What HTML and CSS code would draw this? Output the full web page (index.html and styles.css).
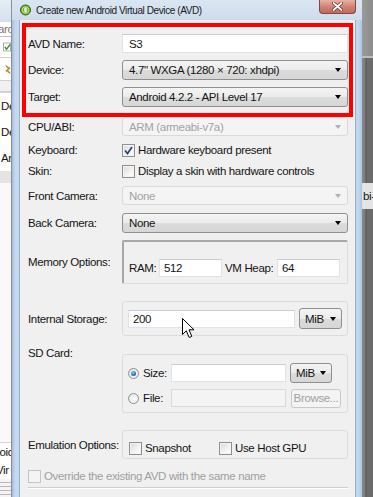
FILE: index.html
```html
<!DOCTYPE html>
<html lang="en">
<head>
    <meta charset="UTF-8">
    <meta name="viewport" content="width=device-width, initial-scale=1.0">
    <title>Create new Android Virtual Device (AVD)</title>
    <link rel="stylesheet" href="styles.css">
</head>
<body>
    <div class="screen">
        <!-- window behind the dialog, left side -->
        <div class="bg-left">
            <div class="bl-top"></div>
            <div class="bl-row bl-search"><span>arc</span></div>
            <div class="bl-row bl-h20">
                <svg class="bl-chk" width="9" height="10" viewBox="0 0 9 10"><rect x="0.5" y="0.5" width="8" height="9" fill="#fff" stroke="#9aa7b5"/><path d="M2 5 L4 7.5 L8 2" fill="none" stroke="#3a9a2a" stroke-width="1.6"/></svg>
            </div>
            <div class="bl-row bl-h22">
                <svg class="bl-gold" width="7" height="11" viewBox="0 0 7 11"><path d="M1 1 L6 4 L3 6 L6 10 L1 7 L4 5 Z" fill="#e0a628" stroke="#a06a10" stroke-width="0.8"/></svg>
            </div>
            <div class="bl-gap"></div>
            <div class="bl-row bl-text bl-first"><span>De</span></div>
            <div class="bl-row bl-text"><span>Dev</span></div>
            <div class="bl-row bl-text"><span>And</span></div>
            <div class="bl-band"></div>
            <div class="bl-fill"></div>
            <div class="bl-row bl-low bl-first"><span>roid</span></div>
            <div class="bl-row bl-low"><span>Vir</span></div>
            <div class="bl-foot"></div>
        </div>

        <div class="window">
            <div class="titlebar">
                <svg class="app-icon" width="11" height="12" viewBox="0 0 11 12">
                    <circle cx="5.5" cy="6" r="5" fill="#6ab02a" stroke="#2f5f0e" stroke-width="1"/>
                    <circle cx="5.5" cy="6" r="3.3" fill="none" stroke="#d8ee9a" stroke-width="0.8"/>
                    <rect x="4.3" y="3.5" width="2.4" height="5" rx="1" fill="#f4f8d8"/>
                </svg>
                <span class="title">Create new Android Virtual Device (AVD)</span>
                <div class="close-btn">
                    <svg width="11" height="9" viewBox="0 0 11 9"><path d="M1.5 1 L9.5 8 M9.5 1 L1.5 8" stroke="#6b2a22" stroke-width="3.2" stroke-linecap="round"/><path d="M1.5 1 L9.5 8 M9.5 1 L1.5 8" stroke="#fff" stroke-width="1.8" stroke-linecap="round"/></svg>
                </div>
            </div>

            <div class="dlg-body">
                <div class="highlight">
                    <div class="row row-name">
                        <span class="lbl">AVD Name:</span>
                        <div class="field field-wide">S3</div>
                    </div>
                    <div class="row row-sel">
                        <span class="lbl">Device:</span>
                        <div class="combo combo-wide"><span>4.7" WXGA (1280 × 720: xhdpi)</span><i class="arrow"></i></div>
                    </div>
                    <div class="row row-sel">
                        <span class="lbl">Target:</span>
                        <div class="combo combo-wide"><span>Android 4.2.2 - API Level 17</span><i class="arrow"></i></div>
                    </div>
                </div>

                <div class="row row-cpu">
                    <span class="lbl">CPU/ABI:</span>
                    <div class="combo combo-wide disabled"><span>ARM (armeabi-v7a)</span><i class="arrow"></i></div>
                </div>
                <div class="row row-check row-kbd">
                    <span class="lbl">Keyboard:</span>
                    <span class="chk checked">
                        <svg width="9" height="9" viewBox="0 0 9 9"><path d="M1 4.5 L3.5 7.5 L8 1" fill="none" stroke="#2b3f7a" stroke-width="1.7"/></svg>
                    </span>
                    <span class="chk-text">Hardware keyboard present</span>
                </div>
                <div class="row row-check row-skin">
                    <span class="lbl">Skin:</span>
                    <span class="chk"></span>
                    <span class="chk-text">Display a skin with hardware controls</span>
                </div>
                <div class="row row-front">
                    <span class="lbl">Front Camera:</span>
                    <div class="combo combo-wide disabled"><span>None</span><i class="arrow"></i></div>
                </div>
                <div class="row row-back">
                    <span class="lbl">Back Camera:</span>
                    <div class="combo combo-wide"><span>None</span><i class="arrow"></i></div>
                </div>

                <div class="row row-mem">
                    <span class="lbl">Memory Options:</span>
                    <div class="group group-mem">
                        <span class="sub-lbl lbl-ram">RAM:</span>
                        <div class="field field-mem">512</div>
                        <span class="sub-lbl lbl-heap">VM Heap:</span>
                        <div class="field field-mem">64</div>
                    </div>
                </div>

                <div class="row row-storage">
                    <span class="lbl">Internal Storage:</span>
                    <div class="group group-storage">
                        <div class="field field-storage">200</div>
                        <div class="combo combo-unit"><span>MiB</span><i class="arrow"></i></div>
                    </div>
                </div>

                <div class="row row-sd">
                    <span class="lbl">SD Card:</span>
                    <div class="group group-sd">
                        <div class="sd-line">
                            <span class="radio-opt"><span class="radio on"></span><span>Size:</span></span>
                            <div class="field field-sd">&nbsp;</div>
                            <div class="combo combo-unit combo-sd"><span>MiB</span><i class="arrow"></i></div>
                        </div>
                        <div class="sd-line sd-file">
                            <span class="radio-opt"><span class="radio"></span><span>File:</span></span>
                            <div class="field field-sd disabled">&nbsp;</div>
                            <div class="btn disabled">Browse...</div>
                        </div>
                    </div>
                </div>

                <div class="row row-emu">
                    <span class="lbl">Emulation Options:</span>
                    <div class="group group-emu">
                        <span class="chk"></span>
                        <span class="chk-text opt-snap">Snapshot</span>
                        <span class="chk"></span>
                        <span class="chk-text">Use Host GPU</span>
                    </div>
                </div>

                <div class="row row-check row-override">
                    <span class="chk disabled"></span>
                    <span class="chk-text dim">Override the existing AVD with the same name</span>
                </div>
                <div class="separator"></div>
            </div>
        </div>

        <!-- window behind the dialog, right side -->
        <div class="bg-right">
            <div class="br-top"></div>
            <div class="br-mid"></div>
            <div class="br-label"><span>bi-</span></div>
            <div class="br-low"></div>
        </div>

        <svg class="cursor" width="13" height="21" viewBox="0 0 13 21">
            <path d="M0.5 0.5 L0.5 16.5 L4.3 12.8 L7.2 19.5 L9.8 18.4 L7 11.8 L12 11.8 Z" fill="#fff" stroke="#000" stroke-width="1" stroke-linejoin="round"/>
        </svg>
    </div>
</body>
</html>
```

FILE: styles.css
```css
body {
    margin: 0;
    font-family: "Liberation Sans", Arial, sans-serif;
    font-size: 11.5px;
    letter-spacing: -0.35px;
    color: #141414;
    overflow: hidden;
}
.screen {
    position: relative;
    display: flex;
    width: 373px;
    height: 497px;
    overflow: hidden;
    background: #6a6a6a;
}

/* ---- background window, left ---- */
.bg-left {
    width: 11px;
    border-right: 1px solid #8b8f96;
    background: #f7f7f7;
    display: flex;
    flex-direction: column;
    overflow: hidden;
}
.bl-top {
    height: 22px;
    background: linear-gradient(#e6eef7, #d3e0ee);
}
.bl-row {
    display: flex;
    align-items: center;
    white-space: nowrap;
    border-bottom: 1px solid #d2d2d2;
    background: #fff;
}
.bl-search {
    height: 14px;
    color: #777;
    border-bottom-color: #c0c0c0;
}
.bl-search span { margin-left: -2px; }
.bl-h20 { height: 20px; }
.bl-h22 { height: 22px; }
.bl-chk { margin-left: 3px; }
.bl-gold { margin-left: 5px; }
.bl-gap {
    height: 10px;
    background: #f0f0f0;
    border-bottom: 1px solid #cfcfcf;
}
.bl-text {
    height: 26px;
    border-bottom: none;
}
.bl-text span { margin-left: 1px; }
.bl-first { border-top: 1px solid #d6d6d6; }
.bl-band {
    height: 12px;
    background: #e4e4e4;
}
.bl-fill {
    flex: 1;
    background: #f9f9f9;
}
.bl-low {
    height: 18px;
    border-bottom: none;
}
.bl-low span { margin-left: -4px; }
.bl-foot {
    height: 18px;
    background: repeating-linear-gradient(#f4f4f4 0 3px, #b8b8b8 3px 4px);
}

/* ---- dialog window ---- */
.window {
    width: 337px;
    padding: 0 6px 0 7px;
    background: linear-gradient(90deg, #9fbcdc, #c5d8ee 3px, #cfdff1 50%, #c2d6ec calc(100% - 3px), #a9c3e0);
    display: flex;
    flex-direction: column;
}
.titlebar {
    height: 20px;
    display: flex;
    align-items: center;
    margin: 0 -6px 0 -7px;
    padding: 0 6px 0 8px;
    background: linear-gradient(#dbe6f3, #cfdcec);
}
.app-icon {
    flex: none;
    margin-right: 5px;
}
.title {
    font-size: 10px;
    letter-spacing: -0.4px;
    color: #1a1a1a;
}
.close-btn {
    margin-left: auto;
    align-self: flex-start;
    width: 35px;
    height: 13px;
    border: 1px solid #7a4a48;
    border-top: none;
    border-radius: 0 0 4px 4px;
    background: linear-gradient(#e8b0a6, #d0806f 55%, #c46a5a);
    display: flex;
    align-items: center;
    justify-content: center;
}

.dlg-body {
    flex: 1;
    background: #f0f0f0;
    padding: 3px 3px 0;
    box-shadow: inset 1px 0 0 #9aaec6, inset -1px 0 0 #9aaec6;
}
.highlight {
    border: 4px solid #ff0000;
    padding: 7px 1px 6px 2px;
}
.row {
    display: flex;
    align-items: center;
    padding: 0 5px 0 6px;
}
.highlight .row { padding: 0; }
.lbl {
    width: 94px;
    flex: none;
    white-space: nowrap;
}

/* vertical rhythm */
.row-name { height: 19px; }
.row-sel { height: 20px; margin-top: 7px; }
.row-cpu { height: 19px; }
.row-kbd { height: 16px; margin-top: 6px; }
.row-skin { height: 16px; margin-top: 5px; }
.row-front { height: 19px; margin-top: 7px; }
.row-back { height: 20px; margin-top: 8px; }
.row-mem { margin-top: 7px; }
.row-storage { margin-top: 17px; }
.row-sd { margin-top: 10px; align-items: flex-start; }
.row-sd .lbl { line-height: 14px; }
.row-emu { margin-top: 17px; }
.row-override { height: 16px; margin-top: 9px; }

/* controls */
.field {
    background: #fff;
    border: 1px solid #e2e3ea;
    border-top-color: #c9ccd4;
    box-sizing: border-box;
    padding: 0 4px;
    display: flex;
    align-items: center;
    white-space: nowrap;
}
.field.disabled {
    background: #f4f4f4;
    border-color: #dadada;
}
.field-wide {
    flex: 1;
    height: 19px;
    padding-left: 6px;
}
.combo {
    box-sizing: border-box;
    display: flex;
    align-items: center;
    padding: 0 6px 0 6px;
    border: 1px solid #8e8f8f;
    border-radius: 3px;
    background: linear-gradient(#f4f4f4, #ebebeb 50%, #dcdcdc 51%, #d6d6d6);
    white-space: nowrap;
}
.combo-wide {
    flex: 1;
    height: 100%;
}
.arrow {
    margin-left: auto;
    width: 0;
    height: 0;
    border-left: 3.5px solid transparent;
    border-right: 3.5px solid transparent;
    border-top: 4px solid #000;
}
.combo.disabled {
    background: #f4f4f4;
    border-color: #d9d9d9;
    color: #a3a3a3;
}
.combo.disabled .arrow { border-top-color: #b0b0b0; }

.chk {
    box-sizing: border-box;
    width: 13px;
    height: 13px;
    flex: none;
    border: 1px solid #8e8f8f;
    background: linear-gradient(135deg, #d8d8d8, #f4f4f4 60%, #fff);
    box-shadow: inset 0 0 0 1px #f4f4f4;
    display: flex;
    align-items: center;
    justify-content: center;
}
.chk.disabled {
    border-color: #c4c4c4;
    background: #f4f4f4;
}
.chk-text {
    margin-left: 3px;
    white-space: nowrap;
}
.dim { color: #a0a0a0; }

.group {
    flex: 1;
    box-sizing: border-box;
    border: 1px solid #dcdcdc;
    border-radius: 3px;
    display: flex;
    align-items: center;
}
.group-mem {
    height: 44px;
    border-top: 2px solid #a7a7a7;
    border-left: 2px solid #a7a7a7;
    border-radius: 2px;
    padding: 17px 0 6px 5px;
}
.sub-lbl { white-space: nowrap; }
.lbl-ram { width: 30px; }
.lbl-heap { width: 52px; margin-left: 3px; }
.field-mem {
    width: 63px;
    height: 18px;
}
.group-storage {
    height: 35px;
    padding: 0 4px 0 5px;
}
.field-storage {
    width: 167px;
    height: 18px;
    margin-top: 1px;
}
.combo-unit {
    width: 43px;
    height: 21px;
    margin-left: 4px;
    padding: 0 5px;
}
.group-sd {
    height: 59px;
    margin-top: 8px;
    flex-direction: column;
    align-items: stretch;
    padding: 8px 0 0 5px;
}
.sd-line {
    height: 20px;
    display: flex;
    align-items: center;
}
.sd-file { margin-top: 5px; }
.radio-opt {
    width: 43px;
    display: flex;
    align-items: center;
    gap: 4px;
}
.radio {
    box-sizing: border-box;
    width: 11px;
    height: 11px;
    border-radius: 50%;
    border: 1px solid #8e8f8f;
    background: radial-gradient(circle at 60% 60%, #fff, #dcdcdc);
    display: flex;
    align-items: center;
    justify-content: center;
}
.radio.on::after {
    content: "";
    width: 5px;
    height: 5px;
    border-radius: 50%;
    background: radial-gradient(circle at 40% 35%, #8ad0f4, #1f6fb4 60%, #0c3e78);
}
.field-sd {
    width: 115px;
    height: 18px;
}
.combo-sd {
    width: 42px;
    height: 20px;
}
.btn {
    box-sizing: border-box;
    width: 50px;
    height: 19px;
    margin-left: 5px;
    border: 1px solid #c8c8c8;
    border-radius: 3px;
    background: #f4f4f4;
    display: flex;
    align-items: center;
    justify-content: center;
}
.btn.disabled { color: #a0a0a0; }
.group-emu {
    height: 29px;
    padding: 7px 0 0 6px;
}
.opt-snap { width: 74px; }

.separator {
    height: 1px;
    margin: 3px 5px 0 6px;
    background: #cfcfcf;
    box-shadow: 0 1px 0 #fff;
}

/* ---- background window, right ---- */
.bg-right {
    width: 11px;
    display: flex;
    flex-direction: column;
    background: linear-gradient(90deg, #8a8a8a, #7c7c7c 3px, #555 4px, #6c6c6c 5px, #6a6a6a);
}
.br-top {
    height: 56px;
    background: linear-gradient(90deg, #9a9a9a, #8c8c8c);
    border-bottom: 2px solid #bdbdbd;
}
.br-mid { height: 125px; }
.br-label {
    height: 26px;
    background: #e4e4e4;
    display: flex;
    align-items: center;
    overflow: hidden;
}
.br-label span { margin-left: 1px; }
.br-low {
    flex: 1;
    background: linear-gradient(90deg, #8a8a8a, #7c7c7c 3px, #555 4px, #6c6c6c 5px, #6a6a6a);
}

/* mouse pointer lies over the field */
.cursor {
    position: absolute;
    left: 182px;
    top: 318px;
}
```
